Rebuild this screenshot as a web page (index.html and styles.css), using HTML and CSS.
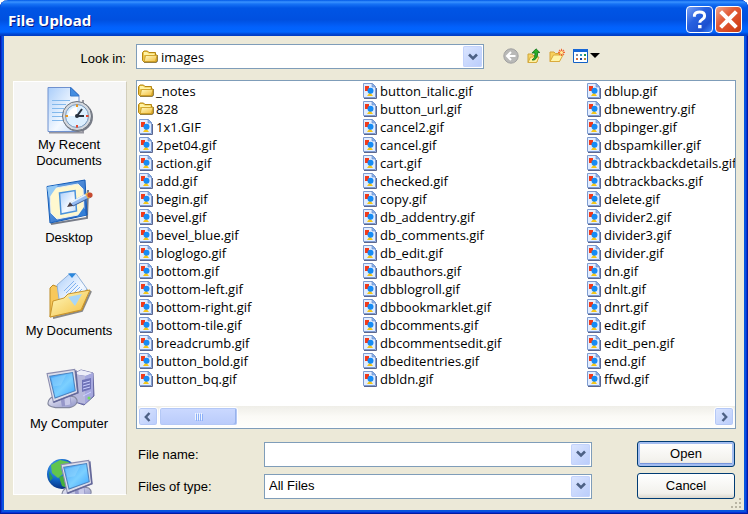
FILE: index.html
```html
<!DOCTYPE html>
<html lang="en">
<head>
<meta charset="utf-8">
<title>File Upload</title>
<link rel="stylesheet" href="styles.css">
</head>
<body>
<svg class="sprites" aria-hidden="true">
  <defs>
    <linearGradient id="gold" x1="0" y1="0" x2="1" y2="1"><stop offset="0" stop-color="#fffbc4"/><stop offset="1" stop-color="#f3bd3c"/></linearGradient>
    <linearGradient id="paper" x1="0" y1="0" x2="1" y2="1"><stop offset="0" stop-color="#a9cdfa"/><stop offset=".6" stop-color="#f4f9ff"/><stop offset="1" stop-color="#c4dcfa"/></linearGradient>
    <linearGradient id="screen" x1="0" y1="0" x2="1" y2="1"><stop offset="0" stop-color="#3f9df6"/><stop offset=".55" stop-color="#7cd0ff"/><stop offset="1" stop-color="#3aa4ff"/></linearGradient>
    <linearGradient id="metal" x1="0" y1="0" x2="1" y2="1"><stop offset="0" stop-color="#f5f5fa"/><stop offset="1" stop-color="#8e92c8"/></linearGradient>
    <linearGradient id="frame" x1="0" y1="0" x2="1" y2="1"><stop offset="0" stop-color="#7fb9f2"/><stop offset="1" stop-color="#1455b8"/></linearGradient>
    <radialGradient id="globe" cx=".35" cy=".3" r=".75"><stop offset="0" stop-color="#62b6f2"/><stop offset=".5" stop-color="#1269cb"/><stop offset="1" stop-color="#062a78"/></radialGradient>
  </defs>
  <symbol id="folder" viewBox="0 0 16 16">
    <path d="M2 13.500H14L15.500 12V6" fill="none" stroke="#777" stroke-width="1.200"/>
    <path d="M.5 11.500V3.500L2 2H5.500L7 3.500H13.500V6H15V12L14 13H2Z" fill="#ecc447" stroke="#b58711"/>
    <path d="M2 3H5L6.500 4.500H12.500V6H2Z" fill="#fff3a5"/>
    <path d="M3.500 6.500H15L13.500 12.500H2.200Z" fill="url(#gold)" stroke="#c99b21" stroke-width=".8"/>
  </symbol>
  <symbol id="image" viewBox="0 0 16 16">
    <path d="M2 15.500H14.500V5" fill="none" stroke="#5c6790"/>
    <path d="M1.500 .5H10.500L13.500 3.500V14.500H1.500Z" fill="#e2edff" stroke="#7e9cd1"/>
    <path d="M10 .5V4H13.500Z" fill="#8db7f4" stroke="#6689c5" stroke-width=".6"/>
    <path d="M3 3H7V8H3Z" fill="#f23a1a"/>
    <path d="M5 13L8 9L11 13Z" fill="#f4c719"/>
    <circle cx="8.500" cy="7.800" r="3" fill="#168bf5"/>
  </symbol>
  <symbol id="monitor" viewBox="0 0 32 38">
    <path d="M2 32C3 26 10 25 18 25L27 27C32 31 28 36 22 37H9C4 36 1 35 2 32Z" fill="url(#metal)" stroke="#83879e"/>
    <path d="M13 25L22 21L24 34L15 36Z" fill="#9697c9"/>
    <path d="M17 25L22 23L23 34L18 35Z" fill="#c8c9e8"/>
    <path d="M1 5L27 1L30 23L7 32Z" fill="#dcddea" stroke="#8b8caf"/>
    <path d="M28 2L30 23L7 32" fill="none" stroke="#64689a" stroke-width="1.500"/>
    <path d="M3.500 7.500L25 4L27.500 21L8.500 28Z" fill="url(#screen)" stroke="#4b82bf"/>
    <path d="M5 9L19 6L14 16L7 17Z" fill="#9edbff" opacity=".4"/>
  </symbol>
</svg>

<main class="window">
  <header class="titlebar">
    <h1>File Upload</h1>
    <button class="caption help" aria-label="Help">
      <svg viewBox="0 0 27 27"><path d="M8 10.500V8.500Q9 5.500 13.500 5.500Q19 5.500 19 9.500Q19 12 16 13.700Q13.800 15 13.800 17" fill="none" stroke="#fff" stroke-width="3.200"/><path d="M12 19.500H15.700V23H12Z" fill="#fff"/></svg>
    </button>
    <button class="caption close" aria-label="Close">
      <svg viewBox="0 0 27 27"><path d="M5 5L22 22M22 5L5 22" stroke="#fff" stroke-width="4.400"/></svg>
    </button>
  </header>

  <div class="content">
    <label class="lookin" for="lookin">Look in:</label>
    <div class="toolbar">
      <div class="combo folders">
        <svg class="small"><use href="#folder"/></svg>
        <select id="lookin"><option>images</option></select>
        <span class="drop"><svg viewBox="0 0 10 8"><path d="M1 1.500L5 5.500L9 1.500" fill="none" stroke="#4d6185" stroke-width="2.600"/></svg></span>
      </div>
      <div class="tools">
        <button aria-label="Back"><svg viewBox="0 0 16 16"><circle cx="8" cy="8" r="7.200" fill="#b9b9b7" stroke="#a1a1a1"/><path d="M12.500 8H4.500M8 4L4 8L8 12" fill="none" stroke="#fff" stroke-width="2"/></svg></button>
        <button aria-label="Up one level"><svg viewBox="0 0 16 16"><path d="M2 14.500V6H6L7 7.500H11V14Z" fill="#f6d664" stroke="#cda438"/><path d="M2 14.500L4.500 9H13L10.500 14.500Z" fill="#fff1a0" stroke="#d5aa3e"/><path d="M6 12Q9.500 10.500 9 5H6L10 .8L13.800 4.500H11.800Q12 10 8.500 12Z" fill="#29ae27" stroke="#11701a" stroke-width=".8"/></svg></button>
        <button aria-label="Create new folder"><svg viewBox="0 0 16 16"><path d="M1 13.500V4H5L6.500 5.500H10.500V13.500Z" fill="#f8d15d" stroke="#d6a339"/><path d="M1 13.500L4.500 7H14L10.500 13.500Z" fill="#fff4a6" stroke="#daaa3d"/><path d="M12.500 .8V8M9 4.400H16M10 1.900L15 6.900M15 1.900L10 6.900" stroke="#f26731" stroke-width="1.100"/><circle cx="12.500" cy="4.400" r="1.500" fill="#fff39b"/></svg></button>
        <button class="views" aria-label="View menu"><svg viewBox="0 0 28 16"><path d="M1.500 1.500H15.500V14.500H1.500Z" fill="#fff" stroke="#1261c7"/><path d="M1 1H16V4H1Z" fill="#1767d6"/><path d="M4 6H6V8H4Z" fill="#8c8c9c"/><path d="M8 6H10V8H8Z" fill="#369dc5"/><path d="M12 6H14V8H12Z" fill="#229746"/><path d="M4 10H6V12H4Z" fill="#d36f3b"/><path d="M8 10H10V12H8Z" fill="#153d9a"/><path d="M12 10H14V12H12Z" fill="#b68b32"/><path d="M18 5H28L23 10Z" fill="#000"/></svg></button>
      </div>
    </div>

    <nav class="places">
      <a href="#"><svg viewBox="0 0 48 48">
        <path d="M4 46.500H38V14" fill="none" stroke="#9696a0" stroke-width="2"/>
        <path d="M3 1.500H26L34 9V45.500H3Z" fill="url(#paper)" stroke="#6f91cf"/>
        <path d="M25.500 1.500V10H34Z" fill="#438de2" stroke="#3779ca"/>
        <path d="M7 14.500H25M7 18.500H21M7 22.500H19M7 26.500H18M7 30.500H19M7 34.500H21" stroke="#82b8ec"/>
        <circle cx="33" cy="31" r="15" fill="#777b86"/><circle cx="32" cy="30" r="14.500" fill="#d5d9df" stroke="#6c737d"/><circle cx="32" cy="30" r="11.500" fill="#ddf0ff" stroke="#7697ba"/>
        <path d="M23 30A9 9 0 0 1 32 21L32 30Z" fill="#fff"/>
        <path d="M32 18.500V21" stroke="#ef9418" stroke-width="2"/><path d="M20.500 30H23" stroke="#ef9418" stroke-width="2"/><path d="M32 39V41.500M41 30H43.500" stroke="#e5482d" stroke-width="2"/>
        <path d="M31 30H39M32 30L37 23" stroke="#29333f" stroke-width="2"/><circle cx="32" cy="30" r="2" fill="#29333f"/>
      </svg>My Recent<br>Documents</a>
      <a href="#"><svg viewBox="0 0 48 48">
        <path d="M6 45L42 39L43 11" fill="none" stroke="#777c88" stroke-width="2"/>
        <path d="M2 7.500L40 1L42 36L5 44Z" fill="url(#frame)" stroke="#145cb8"/>
        <path d="M11 9L33 5L38 10L39 30L33 36L12 40L6 34L5 15Z" fill="#fff8cf" stroke="#edf1ee"/>
        <path d="M2 8L13 6L4 19Z" fill="#94caf6"/><path d="M39 28L41 36L32 38Z" fill="#337fd7"/>
        <path d="M14.500 14L30 11.500L31.500 32L16 35Z" fill="url(#paper)" stroke="#4b93dc" stroke-width="1.500"/>
        <path d="M25 24L43 14L46 18L28 27Z" fill="#94baf0" stroke="#3b5f99"/><path d="M25 24L42 15" stroke="#e9f5ff" stroke-width="1.500"/>
        <path d="M25 23L28 27L22 28Z" fill="#4b3f45"/><path d="M40 15L44 13L47 17L43 20Z" fill="#edb14c"/><circle cx="45" cy="16" r="2.600" fill="#c64a2f"/>
      </svg>Desktop</a>
      <a href="#"><svg viewBox="0 0 48 48">
        <path d="M8 46L37 39L46 19" fill="none" stroke="#898989" stroke-width="2"/>
        <path d="M5 45V16L8 13L13 15L15 19L38 15L44 19L37 38Z" fill="#f8c85b" stroke="#bd8b24"/>
        <path d="M12 13L25 1.500H31L42 17L26 35L14 27Z" fill="url(#paper)" stroke="#91b1d9"/>
        <path d="M23 1.500H31L27 6Z" fill="#2a87dc"/>
        <path d="M19 19L29 9M21 21L31 11M23 23L33 13M25 25L35 15M28 26L37 17" stroke="#81b2f0"/>
        <path d="M5 45L8 29L19 26L23 22L45 18L36 38Z" fill="url(#gold)" stroke="#c8942c"/>
        <path d="M23 25L37 22L30 34Z" fill="#a8d6f8"/>
      </svg>My Documents</a>
      <a href="#"><svg viewBox="0 0 48 48">
        <path d="M28 9L36 5L48 8L49 31L39 40L27 36Z" fill="#7778b5" stroke="#6567a0"/>
        <path d="M28 9L36 5L48 8L41 11Z" fill="#ededf8"/><path d="M28 9L40 11V39L27 36Z" fill="#b8b9dd"/>
        <path d="M40 11L48 8V31L40 39Z" fill="#a5a7de"/><path d="M37 15L46 13V24L37 27Z" fill="#7073b8"/><path d="M38 18L45 16M38 21L45 19M38 24L45 22M38 31L46 27" stroke="#ccd0ff"/><circle cx="44" cy="33" r="1.500" fill="#72df58"/>
        <use href="#monitor" x="1" y="0" width="34" height="47"/>
      </svg>My Computer</a>
      <a href="#" aria-label="My Network"><svg viewBox="0 0 48 48">
        <circle cx="17" cy="16" r="15" fill="url(#globe)"/><path d="M6 7L15 2L24 4L22 10L16 11L18 16L13 20L7 15Z" fill="#62c54d"/><path d="M14 19L21 17L26 22L22 30L17 28Z" fill="#43af3d"/><path d="M4 13L8 20L5 23Z" fill="#2b9858"/>
        <use href="#monitor" x="15" y="-2" width="34" height="47"/>
      </svg></a>
    </nav>

    <section class="listbox" aria-label="Files">
      <ul id="files" class="files"></ul>
      <div class="scrollbar">
        <button aria-label="Scroll left"><svg viewBox="0 0 8 10"><path d="M5.500 1L1.800 5L5.500 9" fill="none" stroke="#4d6185" stroke-width="2.400"/></svg></button>
        <div class="thumb"><i></i><i></i><i></i><i></i></div>
        <button class="right" aria-label="Scroll right"><svg viewBox="0 0 8 10"><path d="M2.500 1L6.200 5L2.500 9" fill="none" stroke="#4d6185" stroke-width="2.400"/></svg></button>
      </div>
    </section>

    <form class="fields">
      <label for="name">File name:</label>
      <div class="combo">
        <input id="name" type="text">
        <span class="drop"><svg viewBox="0 0 10 8"><path d="M1 1.500L5 5.500L9 1.500" fill="none" stroke="#4d6185" stroke-width="2.600"/></svg></span>
      </div>
      <button class="action default" type="button">Open</button>
      <label for="type">Files of type:</label>
      <div class="combo">
        <select id="type"><option>All Files</option></select>
        <span class="drop"><svg viewBox="0 0 10 8"><path d="M1 1.500L5 5.500L9 1.500" fill="none" stroke="#4d6185" stroke-width="2.600"/></svg></span>
      </div>
      <button class="action" type="button">Cancel</button>
    </form>
  </div>
  <svg class="grip" viewBox="0 0 12 12" aria-hidden="true"><path d="M9 1h2v2h-2zM5 5h2v2h-2zM9 5h2v2h-2zM1 9h2v2h-2zM5 9h2v2h-2zM9 9h2v2h-2z" fill="#b8b4a3"/></svg>
</main>
<script src="files.js"></script>
</body>
</html>
```
FILE: styles.css
```css
* { box-sizing: border-box; }
body { margin: 0; background: #fff; color: #000; font: 13px/16px "Liberation Sans", sans-serif; }
button, input, select { font: inherit; color: inherit; margin: 0; padding: 0; border: 0; }
svg { display: block; flex: none; }
.sprites { position: absolute; width: 0; height: 0; }

.window {
  position: relative;
  display: flex;
  flex-direction: column;
  min-height: 100vh;
  padding: 0 4px 4px;
  border-radius: 8px 8px 0 0;
  overflow: hidden;
  background: #ece9d8;
  box-shadow: inset 1px -1px #001ea0, inset -1px 0 #001ea0, inset 2px -2px #0831d9, inset -2px 0 #0831d9, inset 4px -4px #0855dd, inset -4px 0 #0855dd;
}
.titlebar {
  display: flex;
  align-items: center;
  gap: 2px;
  height: 36px;
  margin: 0 -4px;
  padding: 3px 6px 0 8px;
  background: linear-gradient(#0058e6 0, #3a93ff 2px, #1672f5 4px, #0055e5 8px, #0050e0 20px, #0261fc 27px, #0066ff 32px, #0048d5 34px, #003bc0 36px);
}
.titlebar h1 { flex: 1; margin: 0; color: #fff; font: bold 15px/20px "Noto Sans", sans-serif; text-shadow: 1px 1px #0a1883; }
.caption { width: 27px; height: 27px; border: 1px solid #fff; border-radius: 4px; }
.caption svg { width: 25px; height: 25px; }
.help { background: linear-gradient(135deg, #7ba2f4, #2861e0 40%, #1c50cf 75%, #3a86fb); }
.close { background: linear-gradient(135deg, #f0a58c, #e25c37 40%, #d4451d 80%, #b93b15); }

.content {
  flex: 1;
  display: grid;
  grid-template-columns: 114px minmax(0, 1fr);
  grid-template-rows: auto 1fr auto;
  column-gap: 9px;
  padding: 8px 8px 11px 9px;
}
.lookin { align-self: center; justify-self: end; padding: 4px 1px 0 0; }
.toolbar { display: flex; align-items: center; gap: 19px; }
.combo { display: flex; align-items: center; height: 25px; padding: 1px; border: 1px solid #7f9db9; background: #fff; }
.combo input, .combo select { flex: 1; min-width: 0; height: 100%; padding: 0 3px; appearance: none; background: transparent; outline: 0; }
.folders { flex: 0 1 348px; padding-left: 5px; }
.folders select { font: 13px/18px "Open Sans", sans-serif; }
.small { width: 16px; height: 16px; }
.drop { display: grid; place-items: center; width: 19px; height: 21px; border-radius: 2px; background: linear-gradient(135deg, #dce6ff, #b9ccfb); box-shadow: inset 0 0 0 1px #c3d3fc; pointer-events: none; }
.drop svg { width: 10px; height: 8px; }
.tools { display: flex; gap: 7px; padding-bottom: 2px; }
.tools button { width: 16px; height: 16px; background: none; }
.tools svg { width: 100%; height: 16px; }
.tools .views { width: 28px; }

.places {
  grid-row: 2 / 4;
  contain: size;
  overflow: hidden;
  margin: 12px 0 4px;
  padding: 4px 2px 0 0;
  background: #f5f5f5;
  border: 1px solid #fff;
  border-right-color: #d2cebb;
}
.places a { display: flex; flex-direction: column; align-items: center; height: 93px; color: #000; text-align: center; text-decoration: none; }
.places svg { width: 48px; height: 48px; margin-bottom: 3px; overflow: visible; }

.listbox { display: flex; flex-direction: column; margin-top: 11px; padding: 1px 0 1px 1px; border: 1px solid #7f9db9; background: #fff; }
.files {
  flex: 1;
  display: grid;
  grid-auto-flow: column;
  grid-template-rows: repeat(17, 18px);
  grid-template-columns: 224px 224px minmax(0, 1fr);
  margin: 0;
  padding: 0;
  overflow: hidden;
  list-style: none;
  font: 13px/18px "Open Sans", sans-serif;
  white-space: nowrap;
}
.files li { display: flex; align-items: center; gap: 2px; min-width: 0; }
.scrollbar { display: flex; gap: 1px; height: 21px; padding: 1px 1px 1px 0; background: linear-gradient(#efeee8, #fbfaf6 50%, #fefefb); }
.scrollbar button { display: grid; place-items: center; width: 20px; height: 19px; border: 1px solid #fff; border-radius: 3px; background: linear-gradient(135deg, #dce6ff, #b9ccfb); box-shadow: inset 0 0 0 1px #b4c8f6; }
.scrollbar button svg { width: 8px; height: 10px; }
.scrollbar .right { margin-left: auto; }
.thumb { display: flex; align-items: center; justify-content: center; gap: 1px; width: 79px; border: 1px solid #fff; border-radius: 3px; background: linear-gradient(#cbd9ff, #b9cbfb); box-shadow: inset 0 0 0 1px #b4c8f6, inset -2px -1px #98b3ec; }
.thumb i { width: 1px; height: 7px; background: #eef4fe; box-shadow: 1px 1px #8cb0f8; }

.fields {
  display: grid;
  grid-template-columns: 126px minmax(0, 328px) minmax(98px, 1fr);
  grid-auto-rows: 26px;
  row-gap: 6px;
  align-items: center;
  margin-top: 12px;
  padding: 0 1px 0 2px;
}
.fields label { padding-top: 2px; }
.action { justify-self: end; width: 98px; height: 26px; border: 1px solid #003c74; border-radius: 3px; background: linear-gradient(#fff, #f2f1ec 80%, #dcd8ce); }
.default { box-shadow: inset 0 0 0 2px #a3bdf0, inset 0 -1px 0 2px #7796dd; }
.grip { position: absolute; right: 6px; bottom: 5px; width: 12px; height: 12px; }
```
FILE: files.js
```js
const names = [
  "_notes", "828", "1x1.GIF", "2pet04.gif", "action.gif", "add.gif", "begin.gif", "bevel.gif", "bevel_blue.gif",
  "bloglogo.gif", "bottom.gif", "bottom-left.gif", "bottom-right.gif", "bottom-tile.gif", "breadcrumb.gif",
  "button_bold.gif", "button_bq.gif",
  "button_italic.gif", "button_url.gif", "cancel2.gif", "cancel.gif", "cart.gif", "checked.gif", "copy.gif",
  "db_addentry.gif", "db_comments.gif", "db_edit.gif", "dbauthors.gif", "dbblogroll.gif", "dbbookmarklet.gif",
  "dbcomments.gif", "dbcommentsedit.gif", "dbeditentries.gif", "dbldn.gif",
  "dblup.gif", "dbnewentry.gif", "dbpinger.gif", "dbspamkiller.gif", "dbtrackbackdetails.gif", "dbtrackbacks.gif",
  "delete.gif", "divider2.gif", "divider3.gif", "divider.gif", "dn.gif", "dnlt.gif", "dnrt.gif", "edit.gif",
  "edit_pen.gif", "end.gif", "ffwd.gif"
];
document.getElementById("files").innerHTML = names.map(name => {
  const icon = /\./.test(name) ? "image" : "folder";
  return `<li><svg class="small"><use href="#${icon}"/></svg>${name}</li>`;
}).join("");
```
